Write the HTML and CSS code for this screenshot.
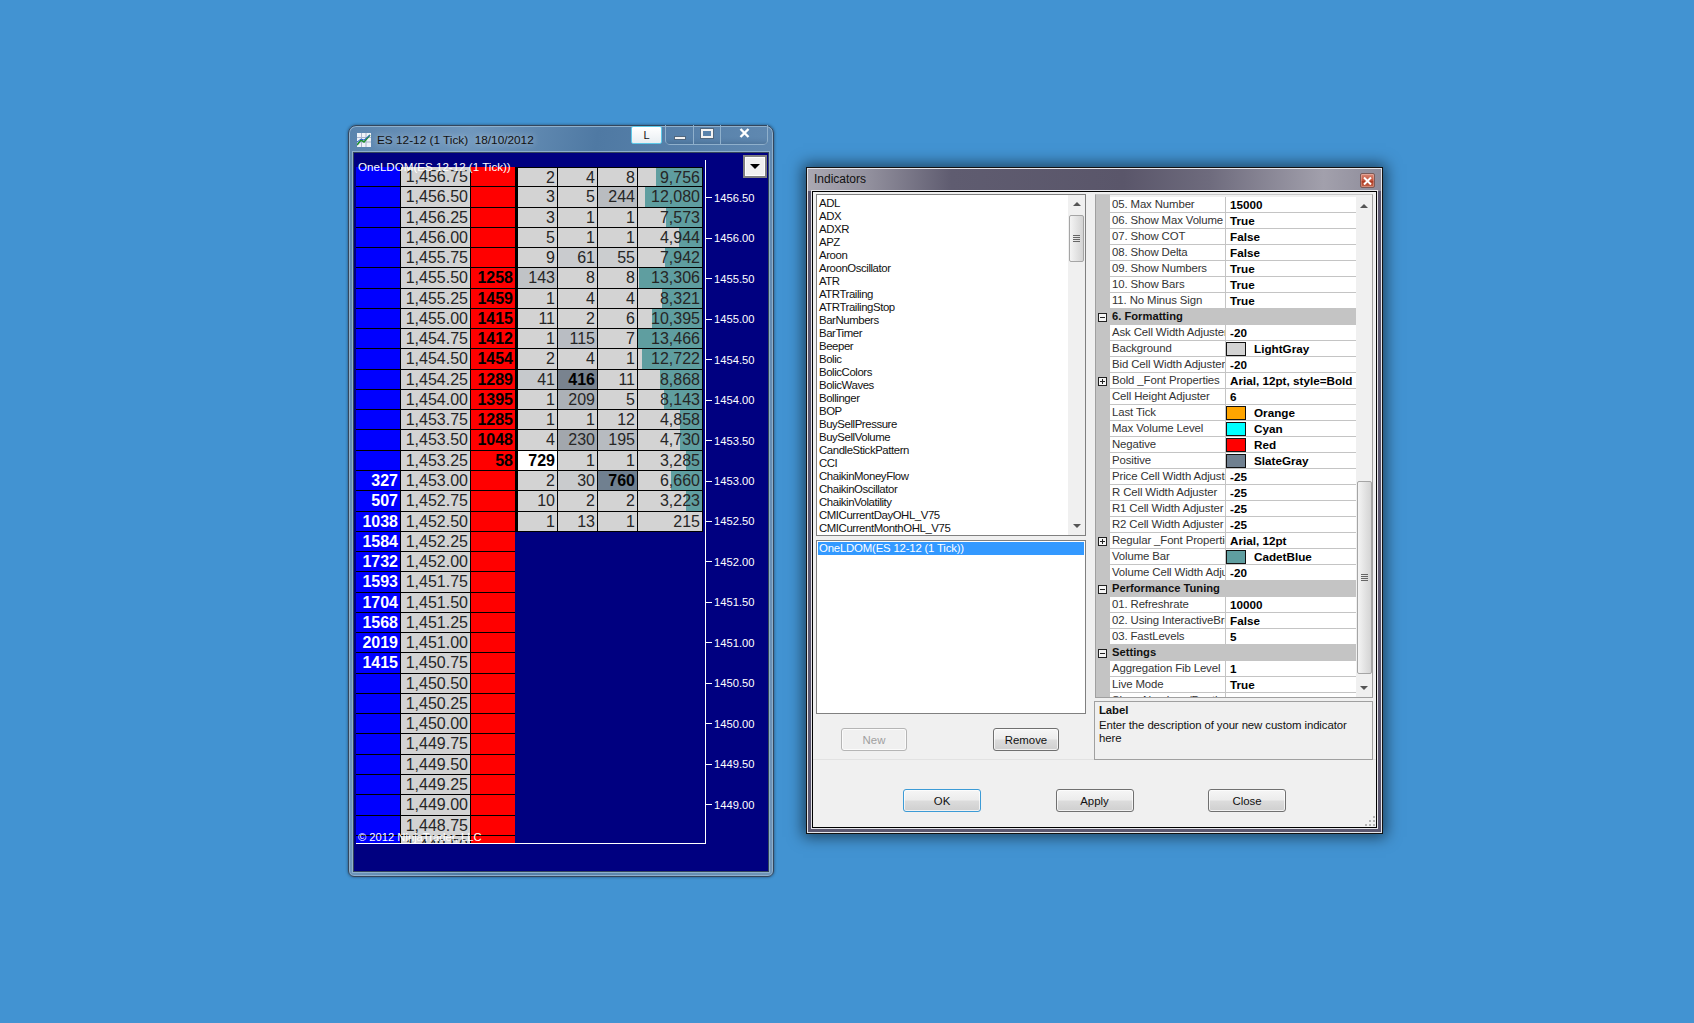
FILE: index.html
```html
<!DOCTYPE html>
<html lang="en">
<head>
    <meta charset="UTF-8">
    <title>Indicators</title>
    <link rel="stylesheet" href="styles.css">
</head>
<body>
    <!-- chart window -->
    <div class="win chart-win">
        <div class="chart-title">
            <svg class="app-icon" width="14" height="14" viewBox="0 0 14 14">
                <rect width="14" height="14" fill="#eef2f8"/>
                <path d="M0 4.5h14M0 9h14M4.5 0v14M9 0v14" stroke="#aab4cc" stroke-width="1"/>
                <path d="M0 12L4 7l3 2 6-7" stroke="#1f8f2f" stroke-width="1.6" fill="none"/>
                <path d="M0 9l4-3 3 1 6-5" stroke="#2a5fd0" stroke-width="1" fill="none"/>
            </svg>
            <span class="chart-caption">ES 12-12 (1 Tick)&nbsp; 18/10/2012</span>
            <button class="l-btn">L</button>
            <div class="caption-btns">
                <div class="cap-min"><i></i></div>
                <div class="cap-max"><i></i></div>
                <div class="cap-close">
                    <svg width="11" height="10" viewBox="0 0 11 10"><path d="M1.5 1l8 8M9.5 1l-8 8" stroke="#fff" stroke-width="2.4"/></svg>
                </div>
            </div>
        </div>
        <div class="chart-client">
            <div class="plot">
                <div class="ladder">
                    <div class="row first"><div class="ask"></div><div class="price">1,456.75</div><div class="bid"></div><div class="block"><div class="c">2</div><div class="c">4</div><div class="c">8</div><div class="vol" style="background-size:46px 100%">9,756</div></div></div>
                    <div class="row"><div class="ask"></div><div class="price">1,456.50</div><div class="bid"></div><div class="block"><div class="c">3</div><div class="c">5</div><div class="c" style="background:#b9bcc0">244</div><div class="vol" style="background-size:57px 100%">12,080</div></div></div>
                    <div class="row"><div class="ask"></div><div class="price">1,456.25</div><div class="bid"></div><div class="block"><div class="c">3</div><div class="c">1</div><div class="c">1</div><div class="vol" style="background-size:36px 100%">7,573</div></div></div>
                    <div class="row"><div class="ask"></div><div class="price">1,456.00</div><div class="bid"></div><div class="block"><div class="c">5</div><div class="c">1</div><div class="c">1</div><div class="vol" style="background-size:23px 100%">4,944</div></div></div>
                    <div class="row"><div class="ask"></div><div class="price">1,455.75</div><div class="bid"></div><div class="block"><div class="c">9</div><div class="c" style="background:#c9cbce">61</div><div class="c" style="background:#cbcdcf">55</div><div class="vol" style="background-size:37px 100%">7,942</div></div></div>
                    <div class="row"><div class="ask"></div><div class="price">1,455.50</div><div class="bid">1258</div><div class="block"><div class="c" style="background:#c0c3c6">143</div><div class="c">8</div><div class="c">8</div><div class="vol" style="background-size:63px 100%">13,306</div></div></div>
                    <div class="row"><div class="ask"></div><div class="price">1,455.25</div><div class="bid">1459</div><div class="block"><div class="c">1</div><div class="c">4</div><div class="c">4</div><div class="vol" style="background-size:40px 100%">8,321</div></div></div>
                    <div class="row"><div class="ask"></div><div class="price">1,455.00</div><div class="bid">1415</div><div class="block"><div class="c">11</div><div class="c">2</div><div class="c">6</div><div class="vol" style="background-size:50px 100%">10,395</div></div></div>
                    <div class="row"><div class="ask"></div><div class="price">1,454.75</div><div class="bid">1412</div><div class="block"><div class="c">1</div><div class="c" style="background:#b9bdc3">115</div><div class="c">7</div><div class="vol" style="background-size:65px 100%">13,466</div></div></div>
                    <div class="row"><div class="ask"></div><div class="price">1,454.50</div><div class="bid">1454</div><div class="block"><div class="c">2</div><div class="c">4</div><div class="c">1</div><div class="vol" style="background-size:60px 100%">12,722</div></div></div>
                    <div class="row"><div class="ask"></div><div class="price">1,454.25</div><div class="bid">1289</div><div class="block"><div class="c" style="background:#c6c9cc">41</div><div class="c max" style="background:#79838f">416</div><div class="c">11</div><div class="vol" style="background-size:42px 100%">8,868</div></div></div>
                    <div class="row"><div class="ask"></div><div class="price">1,454.00</div><div class="bid">1395</div><div class="block"><div class="c">1</div><div class="c" style="background:#acb1b7">209</div><div class="c">5</div><div class="vol" style="background-size:38px 100%">8,143</div></div></div>
                    <div class="row"><div class="ask"></div><div class="price">1,453.75</div><div class="bid">1285</div><div class="block"><div class="c">1</div><div class="c">1</div><div class="c">12</div><div class="vol" style="background-size:22px 100%">4,858</div></div></div>
                    <div class="row"><div class="ask"></div><div class="price">1,453.50</div><div class="bid">1048</div><div class="block"><div class="c">4</div><div class="c" style="background:#a2a7ad">230</div><div class="c" style="background:#b7bbc0">195</div><div class="vol" style="background-size:22px 100%">4,730</div></div></div>
                    <div class="row"><div class="ask"></div><div class="price">1,453.25</div><div class="bid">58</div><div class="block"><div class="c last">729</div><div class="c">1</div><div class="c">1</div><div class="vol" style="background-size:16px 100%">3,285</div></div></div>
                    <div class="row"><div class="ask">327</div><div class="price">1,453.00</div><div class="bid"></div><div class="block"><div class="c">2</div><div class="c" style="background:#c9cbcd">30</div><div class="c max" style="background:#708090">760</div><div class="vol" style="background-size:31px 100%">6,660</div></div></div>
                    <div class="row"><div class="ask">507</div><div class="price">1,452.75</div><div class="bid"></div><div class="block"><div class="c">10</div><div class="c">2</div><div class="c">2</div><div class="vol" style="background-size:16px 100%">3,223</div></div></div>
                    <div class="row"><div class="ask">1038</div><div class="price">1,452.50</div><div class="bid"></div><div class="block"><div class="c">1</div><div class="c">13</div><div class="c">1</div><div class="vol">215</div></div></div>
                    <div class="row"><div class="ask">1584</div><div class="price">1,452.25</div><div class="bid"></div></div>
                    <div class="row"><div class="ask">1732</div><div class="price">1,452.00</div><div class="bid"></div></div>
                    <div class="row"><div class="ask">1593</div><div class="price">1,451.75</div><div class="bid"></div></div>
                    <div class="row"><div class="ask">1704</div><div class="price">1,451.50</div><div class="bid"></div></div>
                    <div class="row"><div class="ask">1568</div><div class="price">1,451.25</div><div class="bid"></div></div>
                    <div class="row"><div class="ask">2019</div><div class="price">1,451.00</div><div class="bid"></div></div>
                    <div class="row"><div class="ask">1415</div><div class="price">1,450.75</div><div class="bid"></div></div>
                    <div class="row"><div class="ask"></div><div class="price">1,450.50</div><div class="bid"></div></div>
                    <div class="row"><div class="ask"></div><div class="price">1,450.25</div><div class="bid"></div></div>
                    <div class="row"><div class="ask"></div><div class="price">1,450.00</div><div class="bid"></div></div>
                    <div class="row"><div class="ask"></div><div class="price">1,449.75</div><div class="bid"></div></div>
                    <div class="row"><div class="ask"></div><div class="price">1,449.50</div><div class="bid"></div></div>
                    <div class="row"><div class="ask"></div><div class="price">1,449.25</div><div class="bid"></div></div>
                    <div class="row"><div class="ask"></div><div class="price">1,449.00</div><div class="bid"></div></div>
                    <div class="row"><div class="ask"></div><div class="price">1,448.75</div><div class="bid"></div></div>
                    <div class="row"><div class="ask"></div><div class="price">1,448.50</div><div class="bid"></div></div>
                </div>
            </div>
            <div class="axis">
                <div class="tick">1456.50</div>
                <div class="tick">1456.00</div>
                <div class="tick">1455.50</div>
                <div class="tick">1455.00</div>
                <div class="tick">1454.50</div>
                <div class="tick">1454.00</div>
                <div class="tick">1453.50</div>
                <div class="tick">1453.00</div>
                <div class="tick">1452.50</div>
                <div class="tick">1452.00</div>
                <div class="tick">1451.50</div>
                <div class="tick">1451.00</div>
                <div class="tick">1450.50</div>
                <div class="tick">1450.00</div>
                <div class="tick">1449.50</div>
                <div class="tick">1449.00</div>
            </div>
            <div class="chart-label">OneLDOM(ES 12-12 (1 Tick))</div>
            <div class="chart-copy">© 2012 NinjaTrader, LLC</div>
            <button class="drop-btn"><i></i></button>
        </div>
    </div>

    <!-- indicators dialog -->
    <div class="win ind-win">
        <div class="ind-title">
            <span>Indicators</span>
            <button class="ind-close">
                <svg width="9" height="8" viewBox="0 0 9 8"><path d="M1 .5l7 7M8 .5l-7 7" stroke="#fff" stroke-width="2"/></svg>
            </button>
        </div>
        <div class="ind-client">
            <div class="split">
                <div class="left-panel">
                    <div class="list-box">
                        <div class="list-items">
                            <div>ADL</div><div>ADX</div><div>ADXR</div><div>APZ</div><div>Aroon</div>
                            <div>AroonOscillator</div><div>ATR</div><div>ATRTrailing</div><div>ATRTrailingStop</div><div>BarNumbers</div>
                            <div>BarTimer</div><div>Beeper</div><div>Bolic</div><div>BolicColors</div><div>BolicWaves</div>
                            <div>Bollinger</div><div>BOP</div><div>BuySellPressure</div><div>BuySellVolume</div><div>CandleStickPattern</div>
                            <div>CCI</div><div>ChaikinMoneyFlow</div><div>ChaikinOscillator</div><div>ChaikinVolatility</div><div>CMICurrentDayOHL_V75</div>
                            <div>CMICurrentMonthOHL_V75</div>
                        </div>
                        <div class="sbar sbar-list">
                            <div class="arr-up"></div>
                            <div class="thumb thumb-list"><i></i></div>
                            <div class="arr-down"></div>
                        </div>
                    </div>
                    <div class="added-box">
                        <div class="added-sel">OneLDOM(ES 12-12 (1 Tick))</div>
                    </div>
                    <div class="left-btns">
                        <button class="btn small" disabled>New</button>
                        <button class="btn small">Remove</button>
                    </div>
                </div>
                <div class="right-panel">
                    <div class="prop-grid">
                        <div class="prop-rows">
                            <div class="prop"><div class="gut"></div><div class="name">05. Max Number</div><div class="val">15000</div></div>
                            <div class="prop"><div class="gut"></div><div class="name">06. Show Max Volume</div><div class="val">True</div></div>
                            <div class="prop"><div class="gut"></div><div class="name">07. Show COT</div><div class="val">False</div></div>
                            <div class="prop"><div class="gut"></div><div class="name">08. Show Delta</div><div class="val">False</div></div>
                            <div class="prop"><div class="gut"></div><div class="name">09. Show Numbers</div><div class="val">True</div></div>
                            <div class="prop"><div class="gut"></div><div class="name">10. Show Bars</div><div class="val">True</div></div>
                            <div class="prop"><div class="gut"></div><div class="name">11. No Minus Sign</div><div class="val">True</div></div>
                            <div class="cat"><div class="gut"><i class="box minus"></i></div>6. Formatting</div>
                            <div class="prop"><div class="gut"></div><div class="name">Ask Cell Width Adjuster</div><div class="val">-20</div></div>
                            <div class="prop"><div class="gut"></div><div class="name">Background</div><div class="val"><i class="swatch sw-lightgray"></i>LightGray</div></div>
                            <div class="prop"><div class="gut"></div><div class="name">Bid Cell Width Adjuster</div><div class="val">-20</div></div>
                            <div class="prop"><div class="gut"><i class="box plus"></i></div><div class="name">Bold _Font Properties</div><div class="val">Arial, 12pt, style=Bold</div></div>
                            <div class="prop"><div class="gut"></div><div class="name">Cell Height Adjuster</div><div class="val">6</div></div>
                            <div class="prop"><div class="gut"></div><div class="name">Last Tick</div><div class="val"><i class="swatch sw-orange"></i>Orange</div></div>
                            <div class="prop"><div class="gut"></div><div class="name">Max Volume Level</div><div class="val"><i class="swatch sw-cyan"></i>Cyan</div></div>
                            <div class="prop"><div class="gut"></div><div class="name">Negative</div><div class="val"><i class="swatch sw-red"></i>Red</div></div>
                            <div class="prop"><div class="gut"></div><div class="name">Positive</div><div class="val"><i class="swatch sw-slate"></i>SlateGray</div></div>
                            <div class="prop"><div class="gut"></div><div class="name">Price Cell Width Adjuster</div><div class="val">-25</div></div>
                            <div class="prop"><div class="gut"></div><div class="name">R Cell Width Adjuster</div><div class="val">-25</div></div>
                            <div class="prop"><div class="gut"></div><div class="name">R1 Cell Width Adjuster</div><div class="val">-25</div></div>
                            <div class="prop"><div class="gut"></div><div class="name">R2 Cell Width Adjuster</div><div class="val">-25</div></div>
                            <div class="prop"><div class="gut"><i class="box plus"></i></div><div class="name">Regular _Font Properties</div><div class="val">Arial, 12pt</div></div>
                            <div class="prop"><div class="gut"></div><div class="name">Volume Bar</div><div class="val"><i class="swatch sw-cadet"></i>CadetBlue</div></div>
                            <div class="prop"><div class="gut"></div><div class="name">Volume Cell Width Adjuster</div><div class="val">-20</div></div>
                            <div class="cat"><div class="gut"><i class="box minus"></i></div>Performance Tuning</div>
                            <div class="prop"><div class="gut"></div><div class="name">01. Refreshrate</div><div class="val">10000</div></div>
                            <div class="prop"><div class="gut"></div><div class="name">02. Using InteractiveBrokers</div><div class="val">False</div></div>
                            <div class="prop"><div class="gut"></div><div class="name">03. FastLevels</div><div class="val">5</div></div>
                            <div class="cat"><div class="gut"><i class="box minus"></i></div>Settings</div>
                            <div class="prop"><div class="gut"></div><div class="name">Aggregation Fib Level</div><div class="val">1</div></div>
                            <div class="prop"><div class="gut"></div><div class="name">Live Mode</div><div class="val">True</div></div>
                            <div class="prop"><div class="gut"></div><div class="name">Show Numbers/Depth</div><div class="val">True</div></div>
                        </div>
                        <div class="sbar sbar-prop">
                            <div class="arr-up"></div>
                            <div class="thumb thumb-prop"><i></i></div>
                            <div class="arr-down"></div>
                        </div>
                    </div>
                    <div class="help-box">
                        <b>Label</b>
                        <p>Enter the description of your new custom indicator here</p>
                    </div>
                </div>
            </div>
            <div class="bottom-btns">
                <button class="btn big default">OK</button>
                <button class="btn big">Apply</button>
                <button class="btn big">Close</button>
            </div>
            <svg class="grip" width="12" height="12" viewBox="0 0 12 12">
                <path d="M9 1h2v2H9zM5 5h2v2H5zM9 5h2v2H9zM1 9h2v2H1zM5 9h2v2H5zM9 9h2v2H9z" fill="#b4b4b4"/>
            </svg>
        </div>
    </div>
</body>
</html>
```

FILE: styles.css
```css
* {
    box-sizing: border-box;
}

body {
    margin: 0;
    height: 1023px;
    overflow: hidden;
    background-color: #4293d2;
    font-family: "Liberation Sans", Arial, sans-serif;
}

.win {
    position: absolute;
    display: flex;
    flex-direction: column;
}

/* chart window */
.chart-win {
    left: 348px;
    top: 125px;
    width: 426px;
    height: 752px;
    border: 1px solid #34465c;
    border-radius: 8px 8px 6px 6px;
    background: linear-gradient(100deg, #5a84ad 0%, #6f97bd 22%, #4f79a3 45%, #5f88b0 75%, #6f94b8 100%);
    box-shadow: inset 0 0 0 1px #8fb0cc, 0 0 3px rgba(0,0,0,0.5);
}

.chart-title {
    height: 27px;
    display: flex;
    align-items: flex-start;
    padding-left: 8px;
    flex-shrink: 0;
}

.app-icon {
    margin-top: 7px;
}

.chart-caption {
    margin: 6px 0 0 6px;
    width: 254px;
    font-size: 11.8px;
    line-height: 16px;
    color: #111;
    white-space: nowrap;
    text-shadow: 0 0 7px rgba(255,255,255,0.75);
}

.l-btn {
    width: 31px;
    height: 18px;
    padding: 0;
    font-family: inherit;
    font-size: 11px;
    color: #111;
    background: linear-gradient(#ffffff, #e8eef2);
    border: 1px solid #5cc8e8;
    border-radius: 2px;
    margin-right: 3px;
}

.caption-btns {
    display: flex;
    width: 103px;
    height: 20px;
    margin-top: -1px;
    border: 1px solid #8fb0cc;
    border-top: none;
    border-radius: 0 0 5px 5px;
}

.caption-btns > div {
    display: flex;
    align-items: center;
    justify-content: center;
    border-right: 1px solid #8fb0cc;
    box-shadow: inset 0 -6px 6px -6px rgba(30,60,90,0.4);
}

.cap-min {
    width: 28px;
}

.cap-min i {
    width: 12px;
    height: 4px;
    margin-top: 6px;
    background-color: #f2f2f2;
    border: 1px solid #51677d;
}

.cap-max {
    width: 27px;
}

.cap-max i {
    width: 12px;
    height: 9px;
    margin-top: -2px;
    border: 2px solid #f2f2f2;
    outline: 1px solid #51677d;
}

.cap-close {
    flex: 1;
    border-right: none !important;
}

.cap-close svg {
    margin-top: -3px;
}

.chart-client {
    position: relative;
    flex: 1;
    margin: 0 5px 5px;
    padding: 7px 0 0 2px;
    display: flex;
    align-items: flex-start;
    background-color: #000080;
    box-shadow: 0 0 0 1px #34465c, 0 0 0 2px #8fb0cc;
}

.plot {
    width: 350px;
    height: 684px;
    padding-top: 7px;
    flex-shrink: 0;
    border-right: 1px solid #fff;
    border-bottom: 1px solid #fff;
}

.ladder {
    height: 676px;
    overflow: hidden;
}

.row {
    display: flex;
    height: 20.28px;
    font-size: 16px;
    line-height: 20px;
    text-align: right;
    color: #262626;
}

.ask, .price, .bid, .c, .vol {
    height: 100%;
    padding-right: 2px;
    border-bottom: 1px solid #000;
    white-space: nowrap;
}

.ask {
    width: 45px;
    background-color: #0000ff;
    color: #fff;
    font-weight: bold;
    border-right: 1px solid #000;
}

.price {
    width: 70px;
    background-color: #d3d3d3;
    border-right: 1px solid #000;
}

.bid {
    width: 44px;
    background-color: #ff0000;
    color: #000;
    font-weight: bold;
}

.block {
    display: flex;
    border-left: 3px solid #000;
}

.c {
    width: 40px;
    background-color: #d3d3d3;
    border-right: 1px solid #000;
}

.c.max {
    font-weight: bold;
    color: #000;
}

.c.last {
    background-color: #fff;
    font-weight: bold;
    color: #000;
}

.vol {
    width: 65px;
    background: #d3d3d3 linear-gradient(#5f9ea0, #5f9ea0) no-repeat right top;
    background-size: 0 100%;
    border-right: 1px solid #000;
}

.first .c, .first .vol {
    border-top: 1px solid #000;
}

.axis {
    padding-top: 17.5px;
}

.tick {
    display: flex;
    align-items: center;
    height: 40.47px;
    font-size: 11.2px;
    color: #fff;
}

.tick::before {
    content: "";
    width: 6px;
    height: 1px;
    margin-right: 2px;
    background-color: #fff;
}

.chart-label {
    position: absolute;
    left: 4px;
    top: 6px;
    font-size: 11.6px;
    line-height: 15px;
    color: #fff;
}

.chart-copy {
    position: absolute;
    left: 4px;
    top: 677px;
    font-size: 11.2px;
    line-height: 15px;
    color: #fff;
}

.drop-btn {
    position: absolute;
    left: 389px;
    top: 2px;
    width: 24px;
    height: 23px;
    padding: 0;
    display: flex;
    align-items: center;
    justify-content: center;
    background-color: #f0f0f0;
    border: 2px solid #808080;
    box-shadow: inset 0 0 0 1px #fff;
}

.drop-btn i {
    width: 0;
    height: 0;
    border-left: 5px solid transparent;
    border-right: 5px solid transparent;
    border-top: 5px solid #000;
}

/* indicators dialog */
.ind-win {
    left: 806px;
    top: 167px;
    width: 577px;
    height: 667px;
    border: 1px solid #111;
    background-color: #5c5870;
    box-shadow: inset 0 0 0 1px #e6e6ea, 0 0 14px 3px rgba(0,0,0,0.55);
}

.ind-title {
    height: 22px;
    flex-shrink: 0;
    display: flex;
    justify-content: space-between;
    margin: 1px 1px 0;
    padding: 3px 6px 0 6px;
    font-size: 12px;
    line-height: 15px;
    color: #111;
    background: linear-gradient(90deg, #aaa8b2 0%, #94929f 10%, #5f5c70 25%, #5a566a 55%, #6e6b7d 70%, #a2a0ac 90%, #8e8c9a 100%);
}

.ind-close {
    width: 15px;
    height: 15px;
    padding: 0;
    margin-top: 1px;
    display: flex;
    align-items: center;
    justify-content: center;
    background: linear-gradient(#d98a78 0%, #c4533c 50%, #ad3a22 55%, #c4654c 100%);
    border: 1px solid #7a5a58;
    border-radius: 2px;
    box-shadow: inset 0 0 0 1px rgba(255,255,255,0.25);
}

.ind-client {
    position: relative;
    flex: 1;
    margin: 0 5px 5px;
    border: 1px solid #000;
    background-color: #f0f0f0;
    box-shadow: 0 0 0 1px #e6e6ea;
    font-size: 11.4px;
    color: #111;
}

.split {
    display: flex;
    height: 568px;
    padding: 2px 0 0 3px;
    border-bottom: 1px solid #e2e2e2;
}

.left-panel {
    width: 270px;
}

.list-box {
    display: flex;
    height: 342px;
    border: 1px solid #808080;
    background-color: #fff;
}

.list-items {
    flex: 1;
    padding: 2px 0 0 2px;
    line-height: 13px;
    letter-spacing: -0.42px;
}

.sbar {
    width: 16px;
    display: flex;
    flex-direction: column;
    align-items: center;
    background-color: #f0f0f0;
    flex-shrink: 0;
}

.sbar-list {
    width: 17px;
}

.arr-up, .arr-down {
    width: 0;
    height: 0;
    border-left: 4px solid transparent;
    border-right: 4px solid transparent;
}

.arr-up {
    margin-top: 7px;
    border-bottom: 4px solid #555;
}

.arr-down {
    margin-top: auto;
    margin-bottom: 7px;
    border-top: 4px solid #555;
}

.thumb {
    width: 15px;
    display: flex;
    align-items: center;
    justify-content: center;
    border: 1px solid #a5a5a5;
    border-radius: 2px;
    background: linear-gradient(90deg, #f4f4f4, #e2e2e2 55%, #d4d4d4);
}

.thumb i {
    width: 7px;
    height: 7px;
    background: repeating-linear-gradient(#666 0 1px, transparent 1px 2px);
}

.thumb-list {
    height: 47px;
    margin-top: 9px;
}

.thumb-prop {
    height: 193px;
    margin-top: 273px;
}

.added-box {
    height: 174px;
    margin-top: 4px;
    padding: 1px;
    border: 1px solid #808080;
    background-color: #fff;
}

.added-sel {
    height: 13px;
    padding-left: 1px;
    line-height: 13px;
    letter-spacing: -0.2px;
    color: #fff;
    background-color: #3399ff;
}

.left-btns {
    display: flex;
    justify-content: space-between;
    padding: 14px 27px 0 25px;
}

.btn {
    padding: 0;
    font-family: inherit;
    font-size: 11.4px;
    color: #111;
    background: linear-gradient(#f6f6f6 0%, #ececec 48%, #dcdcdc 52%, #cfcfcf 100%);
    border: 1px solid #707070;
    border-radius: 3px;
    box-shadow: inset 0 0 0 1px rgba(255,255,255,0.7);
}

.btn.small {
    width: 66px;
    height: 23px;
}

.btn[disabled] {
    color: #a0a0a0;
    background: #f0f0f0;
    border-color: #b5b5b5;
}

.btn.big {
    width: 78px;
    height: 23px;
}

.btn.default {
    border-color: #3c9bd6;
}

.right-panel {
    width: 278px;
    margin-left: 9px;
}

.prop-grid {
    display: flex;
    height: 504px;
    padding-top: 2px;
    border: 1px solid #a0a0a0;
    border-top-color: #c8c8c8;
    background: linear-gradient(90deg, #c4c4c4 14px, #f0f0f0 14px);
    overflow: hidden;
}

.prop-rows {
    width: 260px;
    overflow: hidden;
}

.prop {
    display: flex;
    height: 16px;
    line-height: 15px;
}

.gut {
    width: 14px;
    height: 16px;
    padding: 4px 0 0 2px;
    flex-shrink: 0;
    background-color: #c4c4c4;
}

.name {
    width: 116px;
    padding-left: 2px;
    overflow: hidden;
    white-space: nowrap;
    letter-spacing: -0.12px;
    color: #333;
    background-color: #fff;
    border-bottom: 1px solid #c4c4c4;
    border-right: 1px solid #c4c4c4;
}

.val {
    flex: 1;
    display: flex;
    align-items: center;
    padding: 0 0 1px 4px;
    overflow: hidden;
    white-space: nowrap;
    font-size: 11.7px;
    font-weight: bold;
    color: #000;
    background-color: #fff;
    border-bottom: 1px solid #c4c4c4;
}

.swatch {
    width: 20px;
    height: 14px;
    margin: 1px 8px 0 -4px;
    flex-shrink: 0;
    border: 1px solid #111;
}

.sw-lightgray { background-color: #d3d3d3; }
.sw-orange { background-color: #ffa500; }
.sw-cyan { background-color: #00ffff; }
.sw-red { background-color: #ff0000; }
.sw-slate { background-color: #708090; }
.sw-cadet { background-color: #5f9ea0; }

.cat {
    display: flex;
    height: 16px;
    line-height: 15px;
    font-size: 11.2px;
    font-weight: bold;
    color: #111;
    background-color: #c4c4c4;
}

.cat .gut {
    width: 16px;
}

.box {
    position: relative;
    display: block;
    width: 9px;
    height: 9px;
    border: 1px solid #222;
    background-color: #fff;
}

.box.minus {
    background: linear-gradient(#222, #222) no-repeat center / 5px 1px #f4f4f4;
}

.box.plus {
    background: linear-gradient(#222, #222) no-repeat center / 5px 1px,
                linear-gradient(#222, #222) no-repeat center / 1px 5px,
                #f4f4f4;
}

.help-box {
    height: 59px;
    margin: 3px 0 0 -1px;
    padding: 2px 4px;
    line-height: 13px;
    letter-spacing: -0.1px;
    border: 1px solid #a0a0a0;
}

.help-box p {
    margin: 2px 0 0;
}

.bottom-btns {
    display: flex;
    gap: 74.5px;
    padding: 29px 0 0 90px;
}

.grip {
    position: absolute;
    right: 0;
    bottom: 0;
}
```
